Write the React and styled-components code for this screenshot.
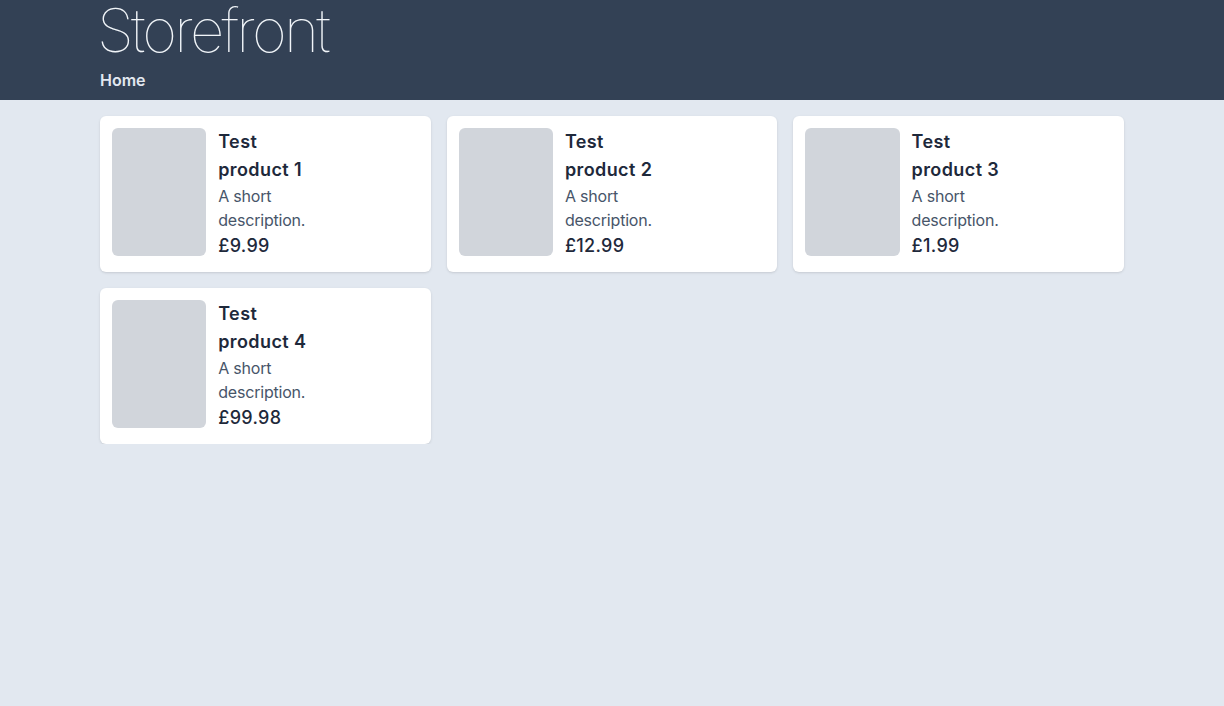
import styled, { createGlobalStyle } from 'styled-components';

const GlobalStyle = createGlobalStyle`
  html, body {
    margin: 0;
    padding: 0;
    background: #e2e8f0;
    font-family: Inter, "Noto Sans", "Liberation Sans", sans-serif;
    min-height: 100%;
  }
  * { box-sizing: border-box; }
`;

const Header = styled.header`
  background: #334155;
  padding-bottom: 8px;
`;

const Container = styled.div`
  width: 1024px;
  margin: 0 auto;
`;

const Title = styled.h1`
  margin: 0 0 0 -3px;
  font-size: 60px;
  line-height: 60px;
  font-weight: 100;
  color: #f1f5f9;
  letter-spacing: -2.8px;
`;

const Nav = styled.nav`
  margin-top: 8px;
  display: flex;
  gap: 16px;
`;

const NavLink = styled.a`
  color: #e2e8f0;
  font-size: 16px;
  line-height: 24px;
  font-weight: 600;
  text-decoration: none;
`;

const Main = styled.main`
  padding-top: 16px;
`;

const Grid = styled.div`
  display: grid;
  grid-template-columns: repeat(3, 1fr);
  gap: 16px;
`;

const Card = styled.div`
  background: #fff;
  border-radius: 6px;
  padding: 12px;
  box-shadow: 0 1px 3px rgba(0, 0, 0, 0.1), 0 1px 2px -1px rgba(0, 0, 0, 0.1);
  display: grid;
  grid-template-columns: repeat(3, 1fr);
  gap: 12px;
`;

const Thumb = styled.div`
  background: #d1d5db;
  border-radius: 6px;
  height: 128px;
`;

const Info = styled.div`
  display: flex;
  flex-direction: column;
`;

const Name = styled.h2`
  margin: 0;
  font-size: 18px;
  line-height: 28px;
  font-weight: 600;
  letter-spacing: 0.4px;
  color: #1e293b;
`;

const Desc = styled.p`
  margin: 0;
  font-size: 16px;
  line-height: 24px;
  letter-spacing: -0.2px;
  color: #475569;
`;

const Price = styled.p`
  margin: 0;
  font-size: 18px;
  line-height: 28px;
  font-weight: 500;
  letter-spacing: 0.3px;
  color: #1e293b;
`;

const products = [
  { name: 'Test product 1', price: '£9.99' },
  { name: 'Test product 2', price: '£12.99' },
  { name: 'Test product 3', price: '£1.99' },
  { name: 'Test product 4', price: '£99.98' },
];

export default function App() {
  return (
    <>
      <GlobalStyle />
      <Header>
        <Container>
          <Title>Storefront</Title>
          <Nav>
            <NavLink href="#">Home</NavLink>
          </Nav>
        </Container>
      </Header>
      <Main>
        <Container>
          <Grid>
            {products.map(p => (
              <Card key={p.name}>
                <Thumb />
                <Info>
                  <Name>{p.name}</Name>
                  <Desc>A short description.</Desc>
                  <Price>{p.price}</Price>
                </Info>
              </Card>
            ))}
          </Grid>
        </Container>
      </Main>
    </>
  );
}
